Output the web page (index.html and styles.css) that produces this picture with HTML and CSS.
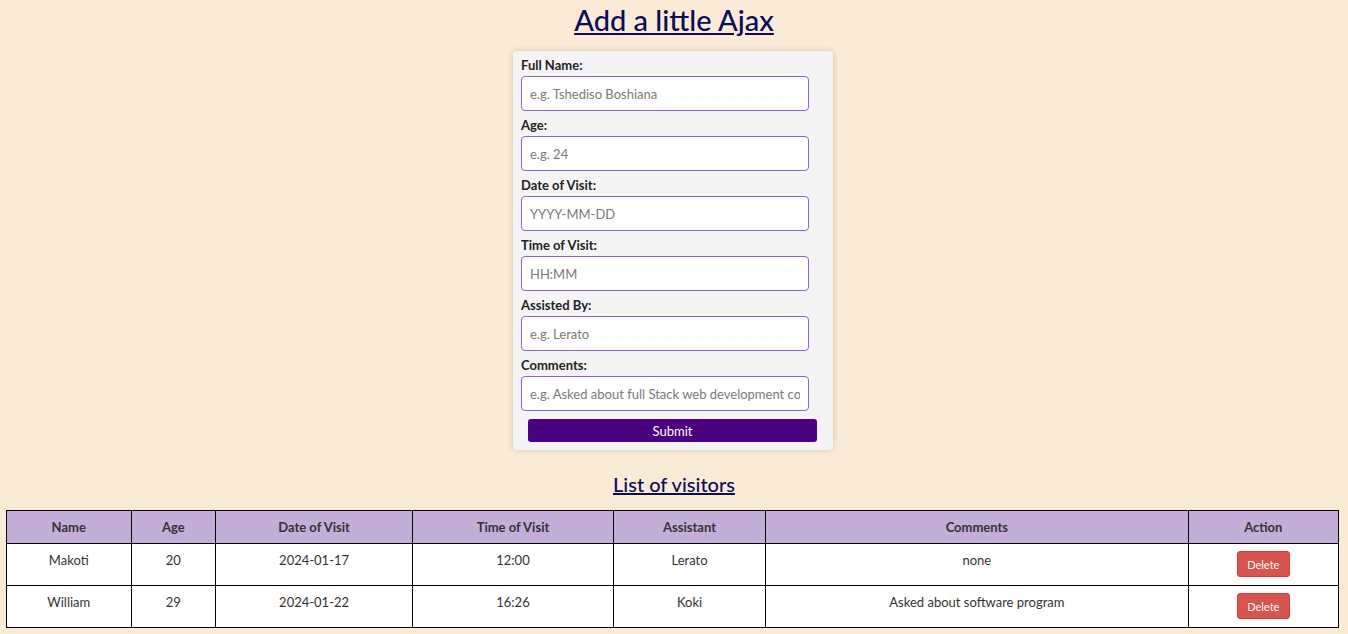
FILE: index.html
```html
<!DOCTYPE html>
<html lang="en">
<head>
<meta charset="utf-8">
<title>Add a little Ajax</title>
<link rel="stylesheet" href="styles.css">
</head>
<body>
<h1 class="title"><a href="#">Add a little Ajax</a></h1>
<form class="card">
  <label class="lbl" for="name">Full Name:</label>
  <input class="inp" id="name" type="text" placeholder="e.g. Tshediso Boshiana">
  <label class="lbl" for="age">Age:</label>
  <input class="inp" id="age" type="text" placeholder="e.g. 24">
  <label class="lbl" for="date">Date of Visit:</label>
  <input class="inp" id="date" type="text" placeholder="YYYY-MM-DD">
  <label class="lbl" for="time">Time of Visit:</label>
  <input class="inp" id="time" type="text" placeholder="HH:MM">
  <label class="lbl" for="assist">Assisted By:</label>
  <input class="inp" id="assist" type="text" placeholder="e.g. Lerato">
  <label class="lbl" for="comments">Comments:</label>
  <input class="inp" id="comments" type="text" placeholder="e.g. Asked about full Stack web development course">
  <button class="submit" type="button">Submit</button>
</form>
<h2 class="subtitle"><a href="#">List of visitors</a></h2>
<table class="visitors">
  <thead>
    <tr>
      <th class="c1">Name</th><th class="c2">Age</th><th class="c3">Date of Visit</th><th class="c4">Time of Visit</th><th class="c5">Assistant</th><th class="c6">Comments</th><th class="c7">Action</th>
    </tr>
  </thead>
  <tbody>
    <tr>
      <td>Makoti</td><td>20</td><td>2024-01-17</td><td>12:00</td><td>Lerato</td><td>none</td><td><button class="del" type="button">Delete</button></td>
    </tr>
    <tr>
      <td>William</td><td>29</td><td>2024-01-22</td><td>16:26</td><td>Koki</td><td>Asked about software program</td><td><button class="del" type="button">Delete</button></td>
    </tr>
  </tbody>
</table>
</body>
</html>
```
FILE: styles.css
```css
html, body {
  margin: 0;
  padding: 0;
}
body {
  background: #faebd7;
  font-family: Lato, "Open Sans", sans-serif;
  color: #333;
  font-size: 14px;
}
.title {
  margin: 4px 0 15px;
  text-align: center;
  font-size: 29px;
  font-weight: 500;
  line-height: 32px;
}
.title a, .subtitle a {
  color: #0b0b5c;
  text-decoration: underline;
}
.card {
  width: 304px;
  margin: 0 0 0 calc(50% - 161px);
  background: #f4f4f4;
  border-radius: 4px;
  box-shadow: 0 0 6px rgba(150, 120, 90, 0.35);
  padding: 6px 8px 8px;
  display: flex;
  flex-direction: column;
}
.lbl {
  font-weight: 700;
  font-size: 13px;
  color: #222;
  line-height: 17px;
  margin-bottom: 2px;
}
.inp {
  width: 288px;
  height: 35px;
  box-sizing: border-box;
  border: 1px solid #8e62c9;
  border-radius: 4px;
  background: #fff;
  padding: 0 8px;
  font-family: inherit;
  font-size: 13px;
  color: #333;
  margin-bottom: 6px;
}
.inp::placeholder {
  color: #7a7a7a;
}
.submit {
  margin: 2px 8px 0 7px;
  width: 289px;
  height: 23px;
  background: #4b0082;
  color: #fff;
  border: none;
  border-radius: 3px;
  font-family: inherit;
  font-size: 13px;
  cursor: pointer;
}
.subtitle {
  margin: 22px 0 14px;
  text-align: center;
  font-size: 20px;
  font-weight: 500;
  line-height: 24px;
}
.visitors {
  width: 1333px;
  margin: 0 6px;
  border-collapse: collapse;
  background: #fff;
}
.visitors th, .visitors td {
  border: 1px solid #000;
  text-align: center;
}
.visitors th {
  background: #c3aed9;
  font-weight: 700;
  color: #333;
  height: 32px;
  padding: 0;
  font-size: 13px;
}
.visitors td {
  padding: 6px 8px 8px;
  vertical-align: top;
  line-height: 20px;
  height: 27px;
  font-size: 13px;
}
.c1 { width: 124px; }
.c2 { width: 84px; }
.c3 { width: 197px; }
.c4 { width: 201px; }
.c5 { width: 152px; }
.c6 { width: 424px; }
.c7 { width: 150px; }
.del {
  width: 53px;
  height: 26px;
  margin-top: 1px;
  background: #d9534f;
  color: #fff;
  border: 1px solid #d43f3a;
  border-radius: 3px;
  font-family: inherit;
  font-size: 11px;
  padding: 0;
  cursor: pointer;
}
```
